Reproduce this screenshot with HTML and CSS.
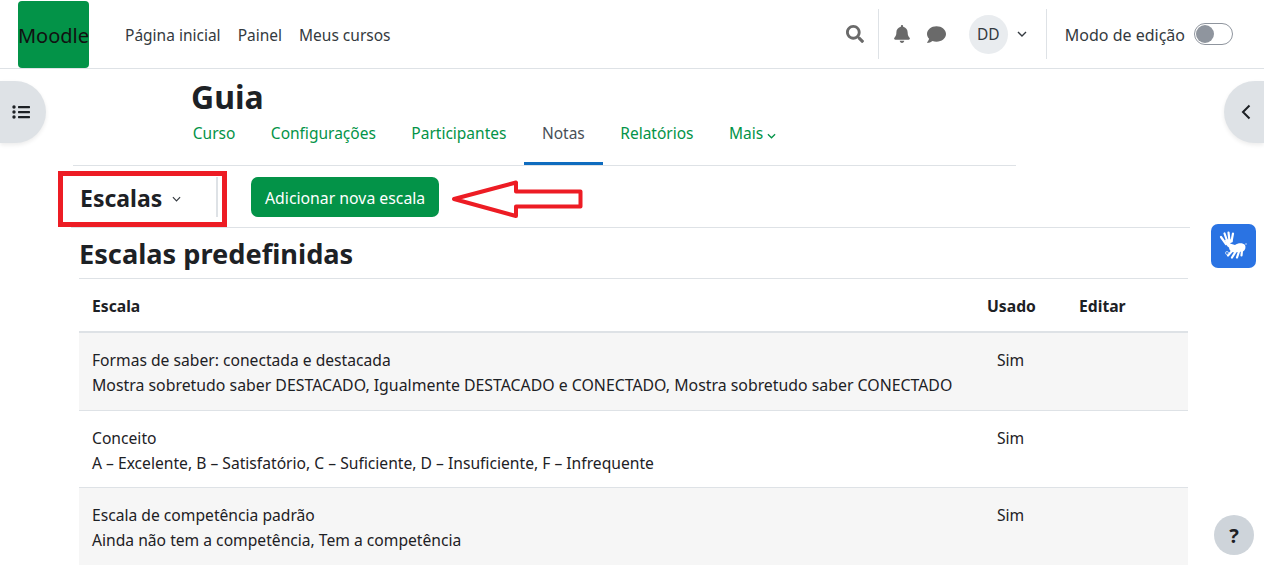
FILE: index.html
```html
<!DOCTYPE html>
<html lang="pt-BR">
<head>
    <meta charset="UTF-8">
    <meta name="viewport" content="width=device-width, initial-scale=1.0">
    <title>Guia: Escalas</title>
    <link rel="stylesheet" href="styles.css">
</head>
<body>
    <nav class="navbar">
        <a class="logo" href="#">Moodle</a>
        <ul class="primary-nav">
            <li><a href="#">Página inicial</a></li>
            <li><a href="#">Painel</a></li>
            <li><a href="#">Meus cursos</a></li>
        </ul>
        <div class="nav-right">
            <button class="icon-btn search-btn" aria-label="Buscar">
                <svg viewBox="0 0 512 512" width="18" height="18"><path fill="#6a6a6a" d="M505 442.700L405.300 343c-4.500-4.500-10.600-7-17-7H372c27.600-35.300 44-79.700 44-128C416 93.100 322.900 0 208 0S0 93.100 0 208s93.100 208 208 208c48.300 0 92.700-16.400 128-44v16.300c0 6.400 2.500 12.500 7 17l99.700 99.700c9.400 9.400 24.600 9.400 33.900 0l28.300-28.300c9.400-9.400 9.400-24.600.1-34zM208 336c-70.700 0-128-57.200-128-128 0-70.700 57.200-128 128-128 70.700 0 128 57.200 128 128 0 70.700-57.200 128-128 128z"/></svg>
            </button>
            <div class="nav-icons">
                <button class="icon-btn" aria-label="Notificações">
                    <svg viewBox="0 0 448 512" width="16" height="18"><path fill="#6a6a6a" d="M224 512c35.300 0 64-28.700 64-64H160c0 35.300 28.700 64 64 64zm215.400-149.700c-19.300-20.800-55.500-52-55.500-154.300 0-77.700-54.500-139.900-128-155.200V32c0-17.700-14.300-32-32-32s-32 14.300-32 32v20.800C118.400 68.100 64 130.300 64 208c0 102.300-36.200 133.500-55.500 154.300-6 6.400-8.600 14.100-8.500 21.700.1 16.400 13 32 32.100 32h383.800c19.100 0 32-15.600 32.100-32 .1-7.600-2.600-15.300-8.500-21.700z"/></svg>
                </button>
                <button class="icon-btn" aria-label="Mensagens">
                    <svg viewBox="0 0 512 512" width="19" height="19"><path fill="#6a6a6a" d="M256 32C114.600 32 0 125.100 0 240c0 49.600 21.400 95 57 130.700C44.500 421.100 2.700 466 2.200 466.500c-2.200 2.300-2.800 5.700-1.500 8.700S4.800 480 8 480c66.300 0 116-31.800 140.600-51.400 32.700 12.300 69 19.400 107.400 19.400 141.400 0 256-93.100 256-208S397.400 32 256 32z"/></svg>
                </button>
            </div>
            <div class="user-menu">
                <span class="avatar">DD</span>
                <svg class="caret" viewBox="0 0 10 6" width="10" height="6"><path d="M1 1l4 4 4-4" fill="none" stroke="#343a40" stroke-width="1.400"/></svg>
            </div>
            <div class="edit-mode">
                <span>Modo de edição</span>
                <span class="switch"><span class="switch-knob"></span></span>
            </div>
        </div>
    </nav>

    <button class="drawer-toggle drawer-left" aria-label="Índice">
        <svg viewBox="0 0 18 14" width="18" height="14"><g fill="#1d2125"><circle cx="2" cy="2" r="1.700"/><circle cx="2" cy="7" r="1.700"/><circle cx="2" cy="12" r="1.700"/><rect x="6" y="1" width="12" height="2.200" rx=".6"/><rect x="6" y="6" width="12" height="2.200" rx=".6"/><rect x="6" y="11" width="12" height="2.200" rx=".6"/></g></svg>
    </button>
    <button class="drawer-toggle drawer-right" aria-label="Blocos">
        <svg viewBox="0 0 10 16" width="10" height="16"><path d="M8.500 1.500L2 8l6.500 6.500" fill="none" stroke="#1d2125" stroke-width="2"/></svg>
    </button>

    <main class="page">
        <div class="course-head">
            <h1>Guia</h1>
            <ul class="tabs">
                <li><a href="#">Curso</a></li>
                <li><a href="#">Configurações</a></li>
                <li><a href="#">Participantes</a></li>
                <li class="active"><a href="#">Notas</a></li>
                <li><a href="#">Relatórios</a></li>
                <li><a href="#">Mais <svg viewBox="0 0 10 6" width="9" height="6"><path d="M1 1l4 4 4-4" fill="none" stroke="#039348" stroke-width="1.400"/></svg></a></li>
            </ul>
        </div>

        <div class="action-bar">
            <div class="page-select">
                <span>Escalas</span>
                <svg viewBox="0 0 10 6" width="9" height="6"><path d="M1 1l4 4 4-4" fill="none" stroke="#343a40" stroke-width="1.300"/></svg>
            </div>
            <a class="btn-add" href="#">Adicionar nova escala</a>
            <!-- marcacoes da captura -->
            <span class="mark-box"></span>
            <svg class="mark-arrow" viewBox="0 0 134 42" width="134" height="42"><path d="M3 20L65 3.500v9h64.500v15H65V37z" fill="#fff" stroke="#ed1c24" stroke-width="4" stroke-linejoin="round"/></svg>
        </div>

        <h2>Escalas predefinidas</h2>

        <table class="scales">
            <thead>
                <tr><th>Escala</th><th>Usado</th><th>Editar</th></tr>
            </thead>
            <tbody>
                <tr>
                    <td>Formas de saber: conectada e destacada<br><span class="caps-line">Mostra sobretudo saber DESTACADO, Igualmente DESTACADO e CONECTADO, Mostra sobretudo saber CONECTADO</span></td>
                    <td class="used">Sim</td>
                    <td></td>
                </tr>
                <tr>
                    <td>Conceito<br>A – Excelente, B – Satisfatório, C – Suficiente, D – Insuficiente, F – Infrequente</td>
                    <td class="used">Sim</td>
                    <td></td>
                </tr>
                <tr>
                    <td>Escala de competência padrão<br>Ainda não tem a competência, Tem a competência</td>
                    <td class="used">Sim</td>
                    <td></td>
                </tr>
            </tbody>
        </table>
    </main>

    <button class="vlibras" aria-label="VLibras">
        <svg viewBox="0 0 45 44" width="45" height="44">
            <g fill="none" stroke="#fff" stroke-width="2.200" stroke-linecap="round">
                <path d="M15 20l-5-7M16.500 18l-3-8.500M18.500 17l-1-8.500M20.500 17.500l1.500-8"/>
                <path d="M22 26l-5 5.500M25 27l-4 6.500M28 27.500l-2 6M31 26.500l-.5 5"/>
            </g>
            <path fill="#fff" d="M14 16c3-1 6-1 8 1l-3 2.500 5 1.500c3-2.500 8-2.500 10 0 1 2 .5 5-2 6.500l-9 1c-3-.5-5-2.500-5-5-2-1-3.500-4-4-7.500z"/>
            <g fill="none" stroke="#b9d2f7" stroke-width="1"><circle cx="16" cy="29" r="1.500"/><path d="M35 21v-2"/></g>
        </svg>
    </button>
    <button class="help-btn" aria-label="Ajuda">?</button>
</body>
</html>
```
FILE: styles.css
```css
* {
    box-sizing: border-box;
}
html, body {
    height: 100%;
}
body {
    margin: 0;
    font-family: "Noto Sans", Arial, sans-serif;
    font-size: 15.5px;
    line-height: 25px;
    color: #1d2125;
    background: #fff;
    overflow: hidden;
}
a {
    text-decoration: none;
    color: inherit;
}
ul {
    list-style: none;
    margin: 0;
    padding: 0;
}
button {
    border: 0;
    background: none;
    padding: 0;
    font: inherit;
}

/* top bar */
.navbar {
    display: flex;
    align-items: center;
    height: 69px;
    padding-left: 18px;
    border-bottom: 1px solid #dee2e6;
}
.logo {
    display: flex;
    align-items: center;
    justify-content: center;
    width: 71px;
    height: 67px;
    margin-top: 1px;
    padding-top: 2px;
    background: #039348;
    border-radius: 4px;
    color: #111;
    font-size: 20px;
}
.primary-nav {
    display: flex;
    gap: 17px;
    margin-left: 36px;
    padding-top: 2px;
    color: #343a40;
}
.nav-right {
    display: flex;
    align-items: center;
    margin-left: auto;
    color: #343a40;
}
.icon-btn {
    display: flex;
    align-items: center;
    justify-content: center;
}
.search-btn {
    padding-right: 14px;
    height: 50px;
    border-right: 1px solid #dee2e6;
}
.nav-icons {
    display: flex;
    gap: 17px;
    margin-left: 15px;
}
.user-menu {
    display: flex;
    align-items: center;
    gap: 9px;
    margin-left: 23px;
    padding-right: 19px;
    height: 50px;
    border-right: 1px solid #dee2e6;
}
.avatar {
    display: flex;
    align-items: center;
    justify-content: center;
    width: 39px;
    height: 39px;
    border-radius: 50%;
    background: #e9ecef;
}
.edit-mode {
    display: flex;
    align-items: center;
    gap: 9px;
    margin-left: 18px;
    margin-right: 31px;
    font-size: 16px;
}
.edit-mode span:first-child {
    padding-top: 2px;
}
.switch {
    display: block;
    width: 39px;
    height: 22px;
    padding: 1px;
    border: 1px solid #8f959e;
    border-radius: 11px;
    background: #fff;
}
.switch-knob {
    display: block;
    width: 18px;
    height: 18px;
    border-radius: 50%;
    background: #8f959e;
}

/* floating buttons */
.drawer-toggle {
    position: absolute;
    top: 81px;
    display: flex;
    align-items: center;
    justify-content: center;
    width: 46px;
    height: 62px;
    background: #dee2e6;
    box-shadow: 0 2px 4px rgba(0, 0, 0, 0.08);
}
.drawer-left {
    left: 0;
    padding-right: 4px;
    border-radius: 0 31px 31px 0;
}
.drawer-right {
    right: 0;
    width: 40px;
    padding-left: 4px;
    border-radius: 31px 0 0 31px;
}
.vlibras {
    position: absolute;
    top: 224px;
    left: 1211px;
    display: flex;
    align-items: center;
    justify-content: center;
    width: 45px;
    height: 44px;
    border-radius: 7px;
    background: #2a73e3;
}
.help-btn {
    position: absolute;
    top: 515px;
    left: 1214px;
    width: 40px;
    height: 40px;
    padding-top: 1px;
    border-radius: 50%;
    background: #ced4da;
    font-size: 20px;
    font-weight: 700;
    color: #1d2125;
}

/* page */
.page {
    padding-left: 71px;
    width: 1190px;
}
.course-head {
    width: 943px;
    margin-left: 2px;
    padding-left: 119px;
    border-bottom: 1px solid #dee2e6;
}
h1 {
    margin: 0 0 0 -1px;
    padding-top: 8px;
    font-size: 32px;
    line-height: 40px;
    font-weight: 700;
}
.tabs {
    display: flex;
    height: 48px;
    margin-left: -17px;
    color: #039348;
}
.tabs a {
    display: block;
    height: 100%;
    padding: 4px 17.75px 0;
    border-bottom: 3px solid transparent;
}
.tabs .active a {
    color: #495057;
    border-bottom-color: #0f6cbf;
}
.action-bar {
    position: relative;
    display: flex;
    align-items: center;
    height: 62px;
    border-bottom: 1px solid #dee2e6;
}
.page-select {
    display: flex;
    align-items: center;
    gap: 11px;
    width: 147px;
    height: 40px;
    padding-left: 9px;
    border-right: 2px solid #dee2e6;
    font-size: 23px;
    font-weight: 700;
}
.page-select span {
    padding-top: 3px;
}
.page-select svg {
    margin-left: -1px;
    margin-top: 5px;
}
.btn-add {
    margin-left: 33px;
    padding: 9px 14px 6px;
    background: #039348;
    border-radius: 7px;
    color: #fff;
    font-size: 15.8px;
}
.mark-box {
    position: absolute;
    left: -13px;
    top: 5px;
    width: 169px;
    height: 56px;
    border: 5px solid #ed1c24;
}
.mark-arrow {
    position: absolute;
    left: 380px;
    top: 13px;
}
h2 {
    margin: 0;
    padding: 8px 0 7px 8px;
    font-size: 27.2px;
    line-height: 35px;
    font-weight: 700;
}
.scales {
    width: 1109px;
    margin-left: 8px;
    border-collapse: collapse;
    table-layout: fixed;
    font-size: 15.65px;
}
.scales th {
    height: 53px;
    padding: 4px 13px 0;
    text-align: left;
    font-size: 15.7px;
    font-weight: 700;
    border-top: 1px solid #dee2e6;
    border-bottom: 2px solid #dee2e6;
}
.scales th:nth-child(1) { width: 895px; }
.scales th:nth-child(2) { width: 92px; }
.scales td {
    height: 79px;
    padding: 15px 13px 10px;
    vertical-align: top;
    border-bottom: 1px solid #dee2e6;
}
.scales tbody tr:nth-child(2) td {
    height: 77px;
}
.scales tbody tr:nth-child(odd) {
    background: #f6f6f6;
}
.scales tbody tr:last-child td {
    height: 77px;
    border-bottom: 0;
}
.scales .used {
    padding-left: 23px;
}
.caps-line {
    font-size: 15.85px;
}
```
